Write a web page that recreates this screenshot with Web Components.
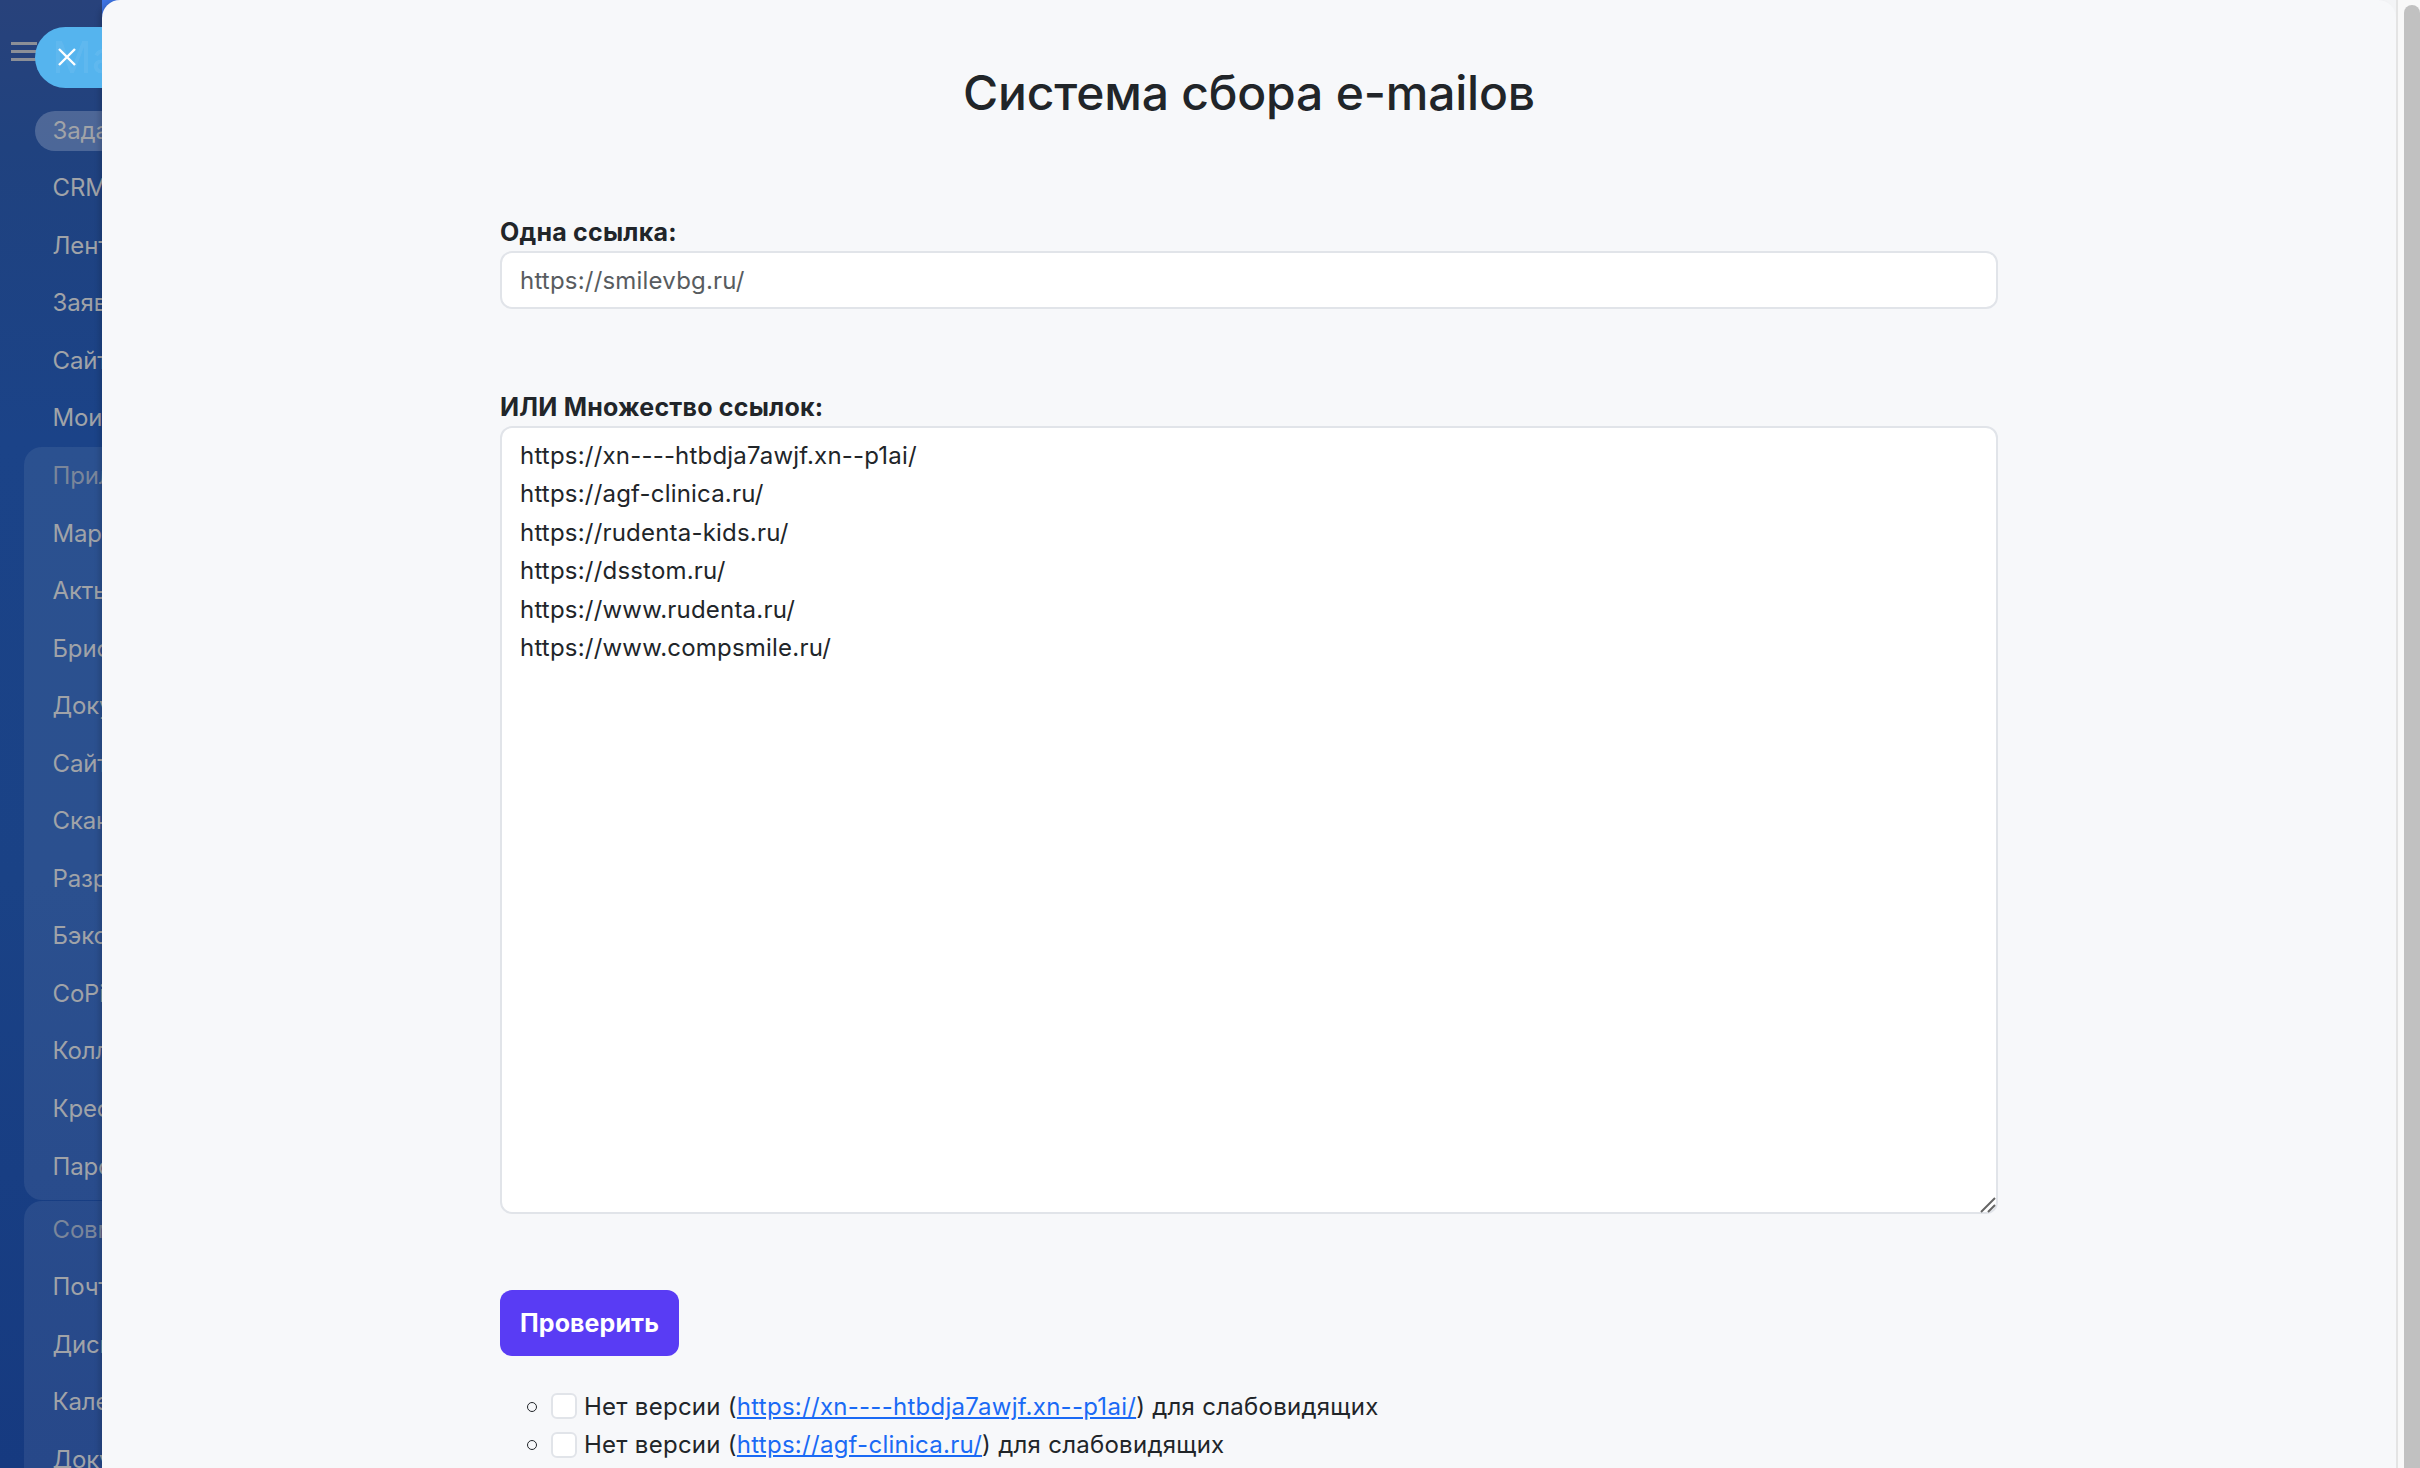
<!DOCTYPE html>
<html lang="ru"><head><meta charset="utf-8"><title>Система сбора e-mailов</title>
<style>
html,body{margin:0;height:100%;overflow:hidden;font-family:Inter,"Noto Sans",sans-serif;}
</style></head><body>
<app-shell>
  <side-menu slot="side"></side-menu>
  <email-page slot="main"></email-page>
</app-shell>
<script>
function comp(name,html){customElements.define(name,class extends HTMLElement{
  constructor(){super();this.attachShadow({mode:'open'}).innerHTML=html;}
});}
comp('app-shell',`<style>
:host{display:grid;grid-template-columns:102px 2294px 24px;height:1468px;overflow:hidden;background:linear-gradient(90deg,#3d74e4 50%,#f3f4f6 50%)}
.bar{background:#f8f8f8;border-left:2px solid #e4e4e4;padding:5px 0 0 6px;box-sizing:border-box}
.thumb{height:100%;background:#c1c1c1;border-radius:8px 8px 0 0}
</style><slot name="side"></slot><slot name="main"></slot><div class="bar"><div class="thumb"></div></div>`);

comp('nav-item',`<style>
:host{display:block;height:57.55px;line-height:57.55px;padding-left:52.5px;font-size:24px;letter-spacing:-.15px;color:#a0a3a8;white-space:nowrap;position:relative}
:host([active])::before{content:"";position:absolute;left:35px;top:9px;bottom:8px;width:300px;border-radius:20px;background:rgba(255,255,255,.2)}
:host([head]){color:#7a869b}
span{position:relative}
</style><span><slot></slot></span>`);

comp('nav-group',`<style>
:host{display:block;margin-left:24px;width:300px;margin-bottom:2px;padding-bottom:5px;border-radius:18px;background:rgba(255,255,255,.075)}
::slotted(nav-item){margin-left:-24px}
:host([tight]) ::slotted(nav-item:first-child){margin-top:-1.5px}
</style><slot></slot>`);

comp('side-menu',`<style>
:host{display:block;width:102px;height:1468px;overflow:hidden;position:relative;
 background:linear-gradient(180deg,#28427b 0,#20427f 10%,#1b4388 30%,#1a4286 60%,#163a80 100%)}
.burger{position:absolute;left:11px;top:42px;width:26px;height:19px;
 background:linear-gradient(#8b8f97 0 3px,transparent 3px 8px,#8b8f97 8px 11px,transparent 11px 16px,#8b8f97 16px 19px)}
.close{position:absolute;left:35px;top:27px;width:200px;height:61px;border-radius:31px;background:#55b4ee;z-index:1;overflow:hidden;
 font-size:44px;line-height:61px;padding-left:17px;box-sizing:border-box;white-space:nowrap;color:rgba(255,255,255,.08)}
.close svg{position:absolute;left:23px;top:21px}
.list{padding-top:101.5px}
.lead{height:345.5px}
</style>
<div class="burger"></div>
<div class="close">Майя<svg width="18" height="18" viewBox="0 0 18 18"><path d="M1 1l16 16M17 1L1 17" stroke="#fff" stroke-width="2.4" fill="none"/></svg></div>
<div class="list">
 <div class="lead">
  <nav-item active>Задачи</nav-item><nav-item>CRM</nav-item><nav-item>Лента</nav-item><nav-item>Заявки</nav-item><nav-item>Сайты</nav-item><nav-item>Мои</nav-item>
 </div>
 <nav-group>
  <nav-item head>Приложения</nav-item><nav-item>Маркет</nav-item><nav-item>Акты</nav-item><nav-item>Брифы</nav-item><nav-item>Документы</nav-item><nav-item>Сайты</nav-item><nav-item>Сканер</nav-item><nav-item>Разработка</nav-item><nav-item>Бэкоффис</nav-item><nav-item>CoPilot</nav-item><nav-item>Коллеги</nav-item><nav-item>Кресла</nav-item><nav-item>Пароли</nav-item>
 </nav-group>
 <nav-group tight>
  <nav-item head>Совместная</nav-item><nav-item>Почта</nav-item><nav-item>Диск</nav-item><nav-item>Календарь</nav-item><nav-item>Документы</nav-item>
 </nav-group>
</div>`);

comp('field-label',`<style>
:host{display:block;font-size:25px;letter-spacing:.22px;font-weight:700;line-height:38px;color:#212529;height:38px}
</style><slot></slot>`);

comp('url-input',`<style>
:host{display:block;height:58px;box-sizing:border-box;background:#fff;border:2px solid #e1e4e9;border-radius:12px;padding:0 18px;font-size:24px;letter-spacing:.2px;line-height:56px;color:#585c60}
</style><slot></slot>`);

comp('url-area',`<style>
:host{display:block;position:relative;height:788px;box-sizing:border-box;background:#fff;border:2px solid #e1e4e9;border-radius:12px;padding:9px 18px;font-size:24px;letter-spacing:.2px;line-height:38.4px;color:#212529}
svg{position:absolute;right:0;bottom:-1px}
</style><slot></slot><svg width="16" height="16" viewBox="0 0 16 16"><path d="M1 15L15 1M8 15l7-7" stroke="#666" stroke-width="2" fill="none"/></svg>`);

comp('check-button',`<style>
:host{display:inline-block;width:179px;height:66px;box-sizing:border-box;background:#593cf4;border-radius:12px;color:#fff;font-size:25px;letter-spacing:.1px;font-weight:700;line-height:66px;text-align:center}
</style><slot></slot>`);

comp('result-item',`<style>
:host{display:flex;align-items:center;height:38.4px;font-size:24px;letter-spacing:.27px;color:#212529;white-space:pre}
.dot{width:8px;height:8px;border:1.5px solid #212529;border-radius:50%;margin:1px 14px 0 27px;flex:none;box-sizing:content-box}
.box{width:26px;height:26px;box-sizing:border-box;background:#fff;border:2px solid #e1e4e9;border-radius:6px;margin-right:7px;flex:none}
::slotted(a){color:#1a6af5}
</style><span class="dot"></span><span class="box"></span><slot></slot>`);

comp('email-page',`<style>
:host{display:block;height:1468px;overflow:hidden;background:#f7f8fa;border-radius:18px 18px 0 0;position:relative;color:#212529;box-shadow:-4px 0 5px -1px rgba(0,0,0,.14)}
h1{margin:0;padding-top:58px;height:213px;box-sizing:border-box;text-align:center;font-size:48px;font-weight:550;letter-spacing:-.2px;line-height:70px}
.wrap{width:1498px;margin-left:398px;display:flex;flex-direction:column;}
.sec2{margin-top:79px}
.btn{margin-top:76px}
ul{list-style:none;margin:0;padding:0;margin-top:31px}
</style>
<h1>Система сбора e-mailов</h1>
<div class="wrap">
 <section><field-label>Одна ссылка:</field-label><url-input>https://smilevbg.ru/</url-input></section>
 <section class="sec2"><field-label>ИЛИ Множество ссылок:</field-label>
  <url-area><div>https://xn----htbdja7awjf.xn--p1ai/</div><div>https://agf-clinica.ru/</div><div>https://rudenta-kids.ru/</div><div>https://dsstom.ru/</div><div>https://www.rudenta.ru/</div><div>https://www.compsmile.ru/</div></url-area>
 </section>
 <div class="btn"><check-button>Проверить</check-button></div>
 <ul>
  <result-item>Нет версии (<a href="#">https://xn----htbdja7awjf.xn--p1ai/</a>) для слабовидящих</result-item>
  <result-item>Нет версии (<a href="#">https://agf-clinica.ru/</a>) для слабовидящих</result-item>
 </ul>
</div>`);
</script>
</body></html>
